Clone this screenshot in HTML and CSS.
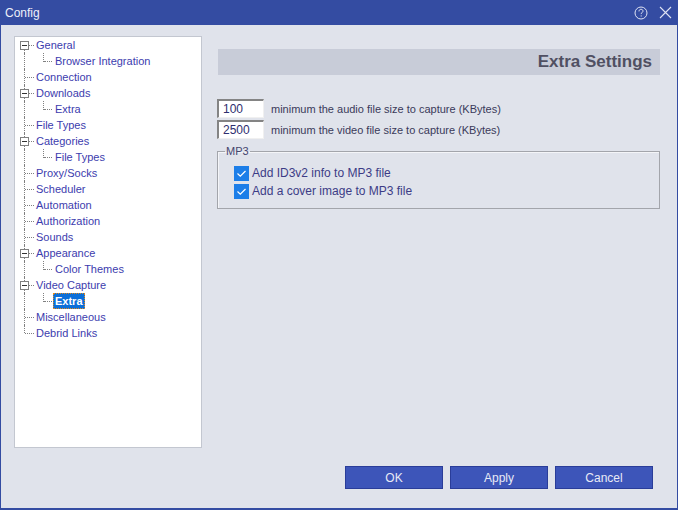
FILE: index.html
```html
<!DOCTYPE html>
<html>
<head>
<meta charset="utf-8">
<link rel="stylesheet" href="styles.css">
</head>
<body>
<div class="window">
  <div class="titlebar">
    <span class="title">Config</span>
    <div class="tb-icons">
      <svg class="tb-icon" width="14" height="14" viewBox="0 0 14 14">
        <circle cx="7" cy="7" r="6" fill="none" stroke="#dfe3f3" stroke-width="1"/>
        <path d="M5 5.4 C5 3.9 6 3.3 7 3.3 C8.2 3.3 9 4 9 5.1 C9 6.3 7.2 6.6 7.2 8.1" fill="none" stroke="#dfe3f3" stroke-width="1"/>
        <rect x="6.7" y="9.4" width="1" height="1.1" fill="#dfe3f3"/>
      </svg>
      <svg class="tb-icon close" width="13" height="13" viewBox="0 0 13 13">
        <path d="M1 1 L12 12 M12 1 L1 12" stroke="#dfe3f3" stroke-width="1.1" fill="none"/>
      </svg>
    </div>
  </div>
  <div class="content">
    <div class="main">
      <div class="tree">
        <div class="row l0 first"><span class="g0"><i class="box"></i></span><span class="lbl">General</span></div>
        <div class="row l1"><span class="g0"></span><span class="g1"></span><span class="lbl">Browser Integration</span></div>
        <div class="row l0"><span class="g0"></span><span class="lbl">Connection</span></div>
        <div class="row l0"><span class="g0"><i class="box"></i></span><span class="lbl">Downloads</span></div>
        <div class="row l1"><span class="g0"></span><span class="g1"></span><span class="lbl">Extra</span></div>
        <div class="row l0"><span class="g0"></span><span class="lbl">File Types</span></div>
        <div class="row l0"><span class="g0"><i class="box"></i></span><span class="lbl">Categories</span></div>
        <div class="row l1"><span class="g0"></span><span class="g1"></span><span class="lbl">File Types</span></div>
        <div class="row l0"><span class="g0"></span><span class="lbl">Proxy/Socks</span></div>
        <div class="row l0"><span class="g0"></span><span class="lbl">Scheduler</span></div>
        <div class="row l0"><span class="g0"></span><span class="lbl">Automation</span></div>
        <div class="row l0"><span class="g0"></span><span class="lbl">Authorization</span></div>
        <div class="row l0"><span class="g0"></span><span class="lbl">Sounds</span></div>
        <div class="row l0"><span class="g0"><i class="box"></i></span><span class="lbl">Appearance</span></div>
        <div class="row l1"><span class="g0"></span><span class="g1"></span><span class="lbl">Color Themes</span></div>
        <div class="row l0"><span class="g0"><i class="box"></i></span><span class="lbl">Video Capture</span></div>
        <div class="row l1"><span class="g0"></span><span class="g1"></span><span class="lbl sel">Extra</span></div>
        <div class="row l0"><span class="g0"></span><span class="lbl">Miscellaneous</span></div>
        <div class="row l0 last"><span class="g0"></span><span class="lbl">Debrid Links</span></div>
      </div>
      <div class="panel">
        <div class="header">Extra Settings</div>
        <div class="fields">
          <div class="field"><span class="input">100</span><span class="flabel">minimum the audio file size to capture (KBytes)</span></div>
          <div class="field"><span class="input">2500</span><span class="flabel">minimum the video file size to capture (KBytes)</span></div>
        </div>
        <fieldset class="group">
          <legend>MP3</legend>
          <div class="check"><span class="cb"><svg width="15" height="15" viewBox="0 0 15 15"><path d="M3.5 7.5 L6.3 10.2 L11.5 5" fill="none" stroke="#ffffff" stroke-width="1.2"/></svg></span><span class="clabel">Add ID3v2 info to MP3 file</span></div>
          <div class="check"><span class="cb"><svg width="15" height="15" viewBox="0 0 15 15"><path d="M3.5 7.5 L6.3 10.2 L11.5 5" fill="none" stroke="#ffffff" stroke-width="1.2"/></svg></span><span class="clabel">Add a cover image to MP3 file</span></div>
        </fieldset>
      </div>
    </div>
    <div class="buttons">
      <button class="btn">OK</button>
      <button class="btn">Apply</button>
      <button class="btn">Cancel</button>
    </div>
  </div>
</div>
</body>
</html>
```
FILE: styles.css
```css
* { box-sizing: border-box; }
html, body { margin: 0; padding: 0; }
body { width: 678px; height: 510px; overflow: hidden; font-family: "Liberation Sans", Arial, sans-serif; }
.window {
  width: 678px; height: 510px;
  background: #e0e3eb;
  border: 1px solid #344ca2;
  border-top: none;
  border-bottom-width: 2px;
  display: flex; flex-direction: column;
}
.titlebar {
  height: 25px; background: #344ca2; margin: 0 -1px;
  display: flex; align-items: center; justify-content: space-between;
  padding: 0 6px 0 5px;
}
.title { color: #eef0fa; font-size: 12px; }
.tb-icons { display: flex; align-items: center; gap: 11px; }
.tb-icon { display: block; }
.content { flex: 1; display: flex; flex-direction: column; padding: 11px 17px 0 13px; }
.main { display: flex; gap: 15px; }
.tree {
  width: 188px; height: 412px; background: #fff; flex: none;
  border: 1px solid #c3c7d0;
  padding: 0 0 0 5px;
}
.row { display: flex; height: 16px; align-items: center; font-size: 11px; color: #3c3cae; }
.g0, .g1 { position: relative; height: 16px; flex: none; }
.g0 { width: 14px; }
.g1 { width: 19px; }
.g0::before {
  content: ""; position: absolute; left: 4px; top: 0; bottom: 0;
  border-left: 1px dotted #808080;
}
.row.first .g0::before { top: 8px; }
.row.last .g0::before { bottom: 8px; }
.l0 .g0::after {
  content: ""; position: absolute; left: 5px; right: 0; top: 8px;
  border-top: 1px dotted #808080;
}
.g1::before {
  content: ""; position: absolute; left: 9px; top: 0; height: 9px;
  border-left: 1px dotted #808080;
}
.g1::after {
  content: ""; position: absolute; left: 10px; right: 1px; top: 8px;
  border-top: 1px dotted #808080;
}
.box {
  position: absolute; left: 0; top: 4px; width: 9px; height: 9px;
  background: #fff; border: 1px solid #808080; z-index: 1;
}
.box::after {
  content: ""; position: absolute; left: 1px; top: 3px; width: 5px; height: 1px; background: #333;
}
.lbl { padding: 0 2px; line-height: 15px; white-space: nowrap; }
.lbl.sel {
  background: #0b6fd9; color: #fff; font-weight: bold;
  outline: 1px dotted #e08a20; outline-offset: -1px; padding: 0 2px;
  line-height: 16px;
}
.panel { width: 443px; flex: none; display: flex; flex-direction: column; }
.header {
  margin: 13px 0 0 1px; height: 26px; background: #c8ccd8;
  color: #505062; font-weight: bold; font-size: 17px;
  display: flex; align-items: center; justify-content: flex-end; padding-right: 8px;
}
.fields { margin-top: 24px; display: flex; flex-direction: column; gap: 2px; }
.field { display: flex; align-items: center; height: 19px; }
.input {
  width: 47px; height: 19px; background: #fff;
  border-top: 2px solid #848484; border-left: 2px solid #848484;
  border-right: 1px solid #f0f0f0; border-bottom: 1px solid #f0f0f0;
  font-size: 12px; color: #2e2e6e; padding: 1px 0 0 4px; line-height: 15px;
}
.flabel { margin-left: 7px; font-size: 11px; color: #3a3a5a; }
.group {
  margin: 7px 0 0 0; border: 1px solid #a3a5ab; padding: 8px 0 0 16px;
  box-shadow: inset 1px 1px 0 #f4f5f8;
  height: 63px;
}
.group legend { font-size: 11px; color: #45456e; padding: 0 1px; margin-left: -9px; line-height: 10px; }
.check { display: flex; align-items: center; height: 18px; }
.cb { width: 15px; height: 15px; background: #1c7ee8; flex: none; display: block; }
.cb svg { display: block; }
.clabel { margin-left: 3px; font-size: 12px; color: #3c3c86; }
.buttons { margin-top: 18px; display: flex; justify-content: flex-end; gap: 7px; padding-right: 7px; }
.btn {
  width: 98px; height: 23px; background: #3d55b9; border: 1px solid #2a3d99;
  color: #e8eaf6; font-family: "Liberation Sans", Arial, sans-serif; font-size: 12px;
  padding: 0; margin: 0;
}
```
